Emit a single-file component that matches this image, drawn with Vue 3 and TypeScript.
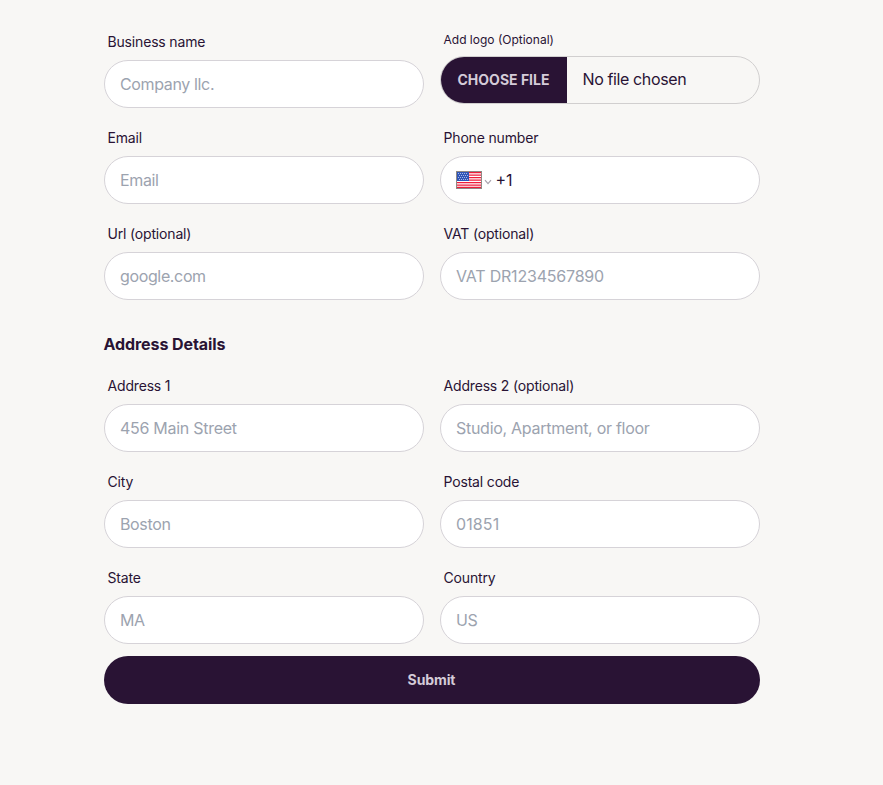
<script setup lang="ts">
import { ref } from 'vue'

interface Field {
  id: string
  label: string
  placeholder: string
  kind?: 'file' | 'phone'
}

const business: Field[] = [
  { id: 'name', label: 'Business name', placeholder: 'Company llc.' },
  { id: 'logo', label: 'Add logo (Optional)', placeholder: '', kind: 'file' },
  { id: 'email', label: 'Email', placeholder: 'Email' },
  { id: 'phone', label: 'Phone number', placeholder: '', kind: 'phone' },
  { id: 'url', label: 'Url (optional)', placeholder: 'google.com' },
  { id: 'vat', label: 'VAT (optional)', placeholder: 'VAT DR1234567890' },
]

const address: Field[] = [
  { id: 'address1', label: 'Address 1', placeholder: '456 Main Street' },
  { id: 'address2', label: 'Address 2 (optional)', placeholder: 'Studio, Apartment, or floor' },
  { id: 'city', label: 'City', placeholder: 'Boston' },
  { id: 'postal', label: 'Postal code', placeholder: '01851' },
  { id: 'state', label: 'State', placeholder: 'MA' },
  { id: 'country', label: 'Country', placeholder: 'US' },
]

const sections = [
  { title: '', fields: business },
  { title: 'Address Details', fields: address },
]

const phone = ref('+1')
</script>

<template>
  <form class="form" @submit.prevent>
    <template v-for="section in sections" :key="section.title">
      <h2 v-if="section.title" class="heading">{{ section.title }}</h2>
      <div v-for="field in section.fields" :key="field.id" class="field">
        <label class="label" :class="{ small: field.kind === 'file' }" :for="field.id">{{ field.label }}</label>

        <div v-if="field.kind === 'file'" class="control file">
          <button :id="field.id" type="button" class="choose">CHOOSE FILE</button>
          <span class="file-name">No file chosen</span>
        </div>

        <div v-else-if="field.kind === 'phone'" class="control phone">
          <svg class="flag" width="26" height="18" viewBox="0 0 26 18">
            <rect width="26" height="18" fill="#fff" />
            <path
              d="M1 1.6h24M1 4.1h24M1 6.6h24M1 9.1h24M1 11.6h24M1 14.1h24M1 16.4h24"
              stroke="#ee1c3b"
              stroke-width="1.3"
            />
            <rect x="1" y="1" width="12" height="9" fill="#2f55b8" />
            <path
              d="M2 2.5h10M3 4.5h9M2 6.5h10M3 8.5h9"
              stroke="#a9bae6"
              stroke-width="1"
              stroke-dasharray="1 1"
            />
            <rect x=".5" y=".5" width="25" height="17" fill="none" stroke="#8f8984" />
          </svg>
          <svg class="chevron" width="8" height="6" viewBox="0 0 8 6">
            <path d="M1 1.2 4 4.6 7 1.2" fill="none" stroke="#a8a2ad" stroke-width="1.2" />
          </svg>
          <input :id="field.id" v-model="phone" class="phone-input" type="tel" />
        </div>

        <input v-else :id="field.id" class="control text" :class="field.id" type="text" :placeholder="field.placeholder" />
      </div>
    </template>
    <button class="submit" type="submit">Submit</button>
  </form>
</template>

<style>
body {
  background: #f8f7f5;
}
</style>

<style scoped>
.form {
  box-sizing: border-box;
  width: 656px;
  margin-left: 104px;
  padding-top: 24px;
  display: grid;
  grid-template-columns: 1fr 1fr;
  gap: 12px 16px;
  color: #291334;
  font-family: Inter, 'Liberation Sans', sans-serif;
  font-size: 16px;
}
.field {
  display: flex;
  flex-direction: column;
  min-width: 0;
}
.label {
  padding: 8px 3.5px;
  font-size: 14px;
  line-height: 20px;
  letter-spacing: -0.17px;
}
.label.small {
  font-size: 12px;
  line-height: 16px;
  letter-spacing: 0;
}
.control {
  box-sizing: border-box;
  width: 100%;
  height: 48px;
  border: 1px solid #d6d3d8;
  border-radius: 24px;
  background: #fff;
}
.text,
.phone-input {
  font: inherit;
  color: inherit;
  outline: none;
  letter-spacing: -0.36px;
}
.text {
  padding: 0 16px 0 15px;
}
.text::placeholder {
  color: #9ca3af;
  opacity: 1;
}
.address1,
.address2 {
  letter-spacing: -0.28px;
}
.vat {
  letter-spacing: -0.2px;
}
.postal {
  letter-spacing: 0.1px;
}
.file {
  display: flex;
  align-items: center;
  overflow: hidden;
  background: transparent;
  border-color: #d1cfcf;
}
.choose {
  width: 126px;
  height: 100%;
  padding: 0 1px 1px 0;
  border: 0;
  background: #291334;
  color: #d4cbd8;
  font: 700 14px Inter, sans-serif;
  letter-spacing: 0;
}
.file-name {
  margin-left: 15.5px;
  padding-bottom: 2px;
  line-height: 24px;
  letter-spacing: -0.38px;
}
.phone {
  display: flex;
  align-items: center;
  padding: 0 15px;
}
.flag {
  flex: none;
}
.chevron {
  flex: none;
  margin: 3px 3.5px 0 2px;
}
.phone-input {
  flex: 1;
  min-width: 0;
  padding: 0;
  border: 0;
  background: transparent;
  letter-spacing: 0;
}
.heading {
  grid-column: 1 / -1;
  margin: 0;
  padding-top: 20px;
  font-size: 16px;
  font-weight: 700;
  line-height: 24px;
  letter-spacing: -0.08px;
  text-indent: -0.5px;
}
.submit {
  grid-column: 1 / -1;
  height: 48px;
  padding: 0 1px 1px 0;
  border: 0;
  border-radius: 24px;
  background: #291334;
  color: #d4cbd8;
  font: 700 14px Inter, sans-serif;
  letter-spacing: -0.1px;
}
</style>
